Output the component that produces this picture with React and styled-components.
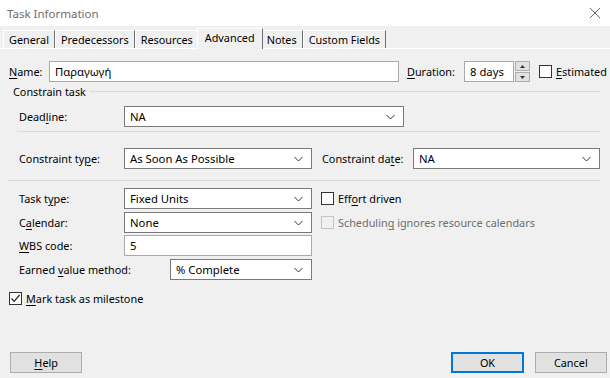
import React from "react";
import styled, { createGlobalStyle } from "styled-components";

const GlobalStyle = createGlobalStyle`
  html, body {
    margin: 0;
    padding: 0;
    background: #f0f0f0;
  }
  body {
    font-family: "Noto Sans", "Open Sans", sans-serif;
    font-size: 10.85px;
    color: #000;
  }
`;

const Dialog = styled.div`
  width: 610px;
  height: 378px;
  display: flex;
  flex-direction: column;
  background: #f0f0f0;
  overflow: hidden;
`;

const TitleBar = styled.div`
  height: 26px;
  flex: none;
  display: flex;
  align-items: center;
  justify-content: space-between;
  padding: 0 10px 0 7px;
  background: #fff;
  color: #6d6d6d;
  font-size: 11.5px;
`;

const TabStrip = styled.div`
  height: 22px;
  flex: none;
  display: flex;
  align-items: flex-end;
  padding-left: 3px;
`;

const Tab = styled.div`
  height: ${(p) => (p.$active ? 21 : 18)}px;
  padding: 0 ${(p) => (p.$active ? 7 : 5)}px;
  margin: 0 ${(p) => (p.$active ? -2 : 0)}px;
  margin-bottom: ${(p) => (p.$active ? -1 : 0)}px;
  padding-bottom: ${(p) => (p.$active ? 4 : 1)}px;
  position: relative;
  z-index: ${(p) => (p.$active ? 1 : 0)};
  display: flex;
  align-items: center;
  box-sizing: border-box;
  background: #f0f0f0;
  border-top: 1px solid #fff;
  border-left: 1px solid #fff;
  border-right: 1px solid ${(p) => (p.$noEdge ? "transparent" : "#6e6e6e")};
`;

const Panel = styled.div`
  flex: 1;
  display: flex;
  flex-direction: column;
  border-top: 1px solid #fff;
  padding-top: 12px;
`;

const Row = styled.div`
  display: flex;
  align-items: center;
  height: 21px;
  margin-top: ${(p) => p.$top || 0}px;
  padding-left: ${(p) => p.$left ?? 19}px;
`;

const Label = styled.div`
  width: ${(p) => p.$w}px;
  flex: none;
  white-space: nowrap;
  margin-left: ${(p) => p.$ml || 0}px;
`;

const Key = styled.span`
  text-decoration: underline;
  text-underline-offset: 2px;
`;

const TextBox = styled.div`
  width: ${(p) => p.$w}px;
  height: 21px;
  box-sizing: border-box;
  flex: none;
  background: #fff;
  border: 1px solid #a9a9a9;
  display: flex;
  align-items: center;
  padding-left: 5px;
  font-size: 11.3px;
`;

const Select = styled.div`
  width: ${(p) => p.$w}px;
  height: 21px;
  box-sizing: border-box;
  flex: none;
  margin-left: ${(p) => p.$ml || 0}px;
  background: #fff;
  border: 1px solid #7a7a7a;
  display: flex;
  align-items: center;
  justify-content: space-between;
  padding: 0 8px 0 5px;
  font-size: 11.3px;
`;

const Chevron = () => (
  <svg width="9" height="6" viewBox="0 0 9 6">
    <path d="M0.5 1 L4.5 5 L8.5 1" fill="none" stroke="#333" strokeWidth="1" />
  </svg>
);

const Spin = styled.div`
  width: 15px;
  height: 21px;
  flex: none;
  margin-left: 1px;
  display: flex;
  flex-direction: column;
  gap: 1px;
`;

const SpinButton = styled.div`
  flex: 1;
  background: #e1e1e1;
  border: 1px solid #adadad;
  display: flex;
  align-items: center;
  justify-content: center;
`;

const Box = styled.div`
  width: 13px;
  height: 13px;
  box-sizing: border-box;
  flex: none;
  border: 1px solid ${(p) => (p.$disabled ? "#c4c4c4" : "#333")};
  background: ${(p) => (p.$disabled ? "#f0f0f0" : "#fff")};
  margin-left: ${(p) => p.$ml || 0}px;
  margin-right: 4px;
  display: flex;
  align-items: center;
  justify-content: center;
`;

const CheckText = styled.div`
  white-space: nowrap;
  color: ${(p) => (p.$disabled ? "#6d6d6d" : "#000")};
`;

const Check = ({ checked, disabled, ml, children }) => (
  <>
    <Box $disabled={disabled} $ml={ml}>
      {checked && (
        <svg width="11" height="11" viewBox="0 0 11 11">
          <path d="M1.5 5.5 L4.2 8.3 L9.5 2" fill="none" stroke="#222" strokeWidth="1.2" />
        </svg>
      )}
    </Box>
    <CheckText $disabled={disabled}>{children}</CheckText>
  </>
);

const Group = styled.div`
  display: flex;
  align-items: center;
  height: 14px;
  margin-top: 2px;
  padding: 0 10px 0 13px;
`;

const GroupLine = styled.div`
  flex: 1;
  height: 1px;
  margin-left: 4px;
  background: #dadada;
`;

const Rule = styled.div`
  height: 1px;
  background: #dadada;
  margin: ${(p) => p.$top}px 10px 0 ${(p) => p.$left}px;
`;

const Footer = styled.div`
  margin-top: auto;
  display: flex;
  align-items: center;
  padding: 0 3px 5px 10px;
`;

const Button = styled.div`
  width: 73px;
  height: 21px;
  box-sizing: border-box;
  background: #e1e1e1;
  border: 1px solid ${(p) => (p.$default ? "#0078d7" : "#adadad")};
  box-shadow: ${(p) => (p.$default ? "inset 0 0 0 1px #0078d7" : "none")};
  display: flex;
  align-items: center;
  justify-content: center;
  margin-left: ${(p) => p.$ml || 0}px;
`;

export default function App() {
  return (
    <Dialog>
      <GlobalStyle />
      <TitleBar>
        <span>Task Information</span>
        <svg width="10" height="10" viewBox="0 0 10 10">
          <path d="M0 0 L10 10 M10 0 L0 10" stroke="#666" strokeWidth="1" />
        </svg>
      </TitleBar>
      <TabStrip>
        <Tab>General</Tab>
        <Tab>Predecessors</Tab>
        <Tab $noEdge>Resources</Tab>
        <Tab $active>Advanced</Tab>
        <Tab>Notes</Tab>
        <Tab>Custom Fields</Tab>
      </TabStrip>
      <Panel>
        <Row $left={9}>
          <Label $w={40}>
            <Key>N</Key>ame:
          </Label>
          <TextBox $w={350}>Παραγωγή</TextBox>
          <Label $w={57} $ml={8}>
            <Key>D</Key>uration:
          </Label>
          <TextBox $w={50}>8 days</TextBox>
          <Spin>
            <SpinButton>
              <svg width="5" height="3" viewBox="0 0 5 3">
                <path d="M0 3 L2.5 0 L5 3 Z" fill="#333" />
              </svg>
            </SpinButton>
            <SpinButton>
              <svg width="5" height="3" viewBox="0 0 5 3">
                <path d="M0 0 L2.5 3 L5 0 Z" fill="#333" />
              </svg>
            </SpinButton>
          </Spin>
          <Check ml={9}>
            <Key>E</Key>stimated
          </Check>
        </Row>

        <Group>
          Constrain task
          <GroupLine />
        </Group>

        <Row $top={8}>
          <Label $w={105}>
            Dead<Key>l</Key>ine:
          </Label>
          <Select $w={280}>
            NA
            <Chevron />
          </Select>
        </Row>
        <Rule $top={4} $left={17} />

        <Row $top={16}>
          <Label $w={105}>
            Constraint ty<Key>p</Key>e:
          </Label>
          <Select $w={188}>
            As Soon As Possible
            <Chevron />
          </Select>
          <Label $w={91} $ml={10}>
            Constraint da<Key>t</Key>e:
          </Label>
          <Select $w={187}>
            NA
            <Chevron />
          </Select>
        </Row>
        <Rule $top={11} $left={8} />

        <Row $top={7}>
          <Label $w={105}>
            Task t<Key>y</Key>pe:
          </Label>
          <Select $w={188}>
            Fixed Units
            <Chevron />
          </Select>
          <Check ml={9}>
            Eff<Key>o</Key>rt driven
          </Check>
        </Row>
        <Row $top={3}>
          <Label $w={105}>
            C<Key>a</Key>lendar:
          </Label>
          <Select $w={188}>
            None
            <Chevron />
          </Select>
          <Check ml={9} disabled>
            Schedulin<Key>g</Key> ignores resource calendars
          </Check>
        </Row>
        <Row $top={2}>
          <Label $w={105}>
            <Key>W</Key>BS code:
          </Label>
          <TextBox $w={188}>5</TextBox>
        </Row>
        <Row $top={3}>
          <Label $w={151}>
            Earned <Key>v</Key>alue method:
          </Label>
          <Select $w={142}>
            % Complete
            <Chevron />
          </Select>
        </Row>
        <Row $top={8} $left={9}>
          <Check checked>
            <Key>M</Key>ark task as milestone
          </Check>
        </Row>

        <Footer>
          <Button>
            <span>
              <Key>H</Key>elp
            </span>
          </Button>
          <Button $default $ml={369}>
            OK
          </Button>
          <Button $ml={11}>Cancel</Button>
        </Footer>
      </Panel>
    </Dialog>
  );
}
